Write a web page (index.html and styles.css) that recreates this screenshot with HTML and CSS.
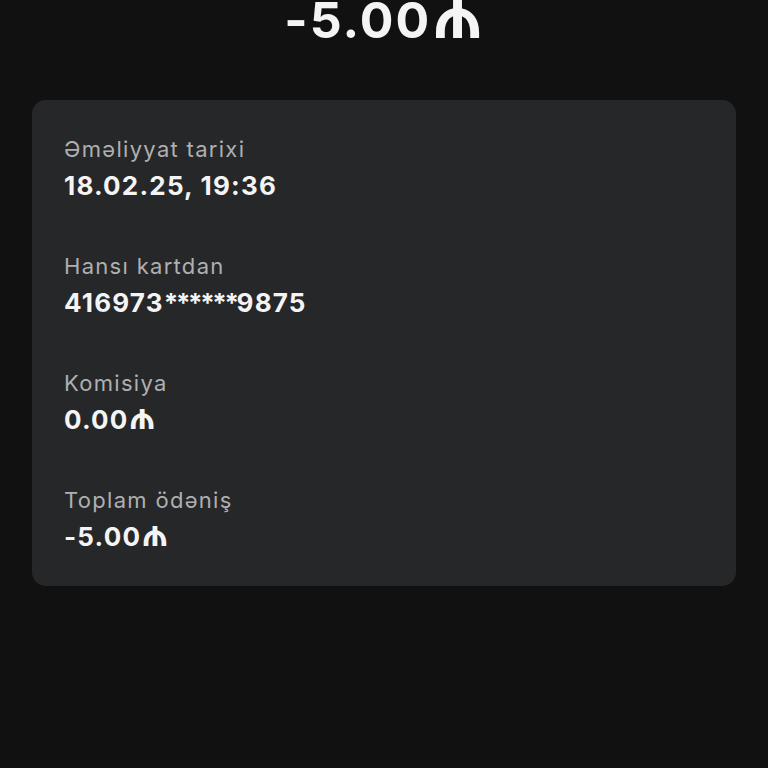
FILE: index.html
```html
<!DOCTYPE html>
<html>
	<head>
		<meta charset="utf-8">
		<title>Əməliyyat</title>
		<link rel="stylesheet" href="styles.css">
	</head>
	<body>
		<div class="amount">-5.00<span class="cur">₼</span></div>
		<div class="card">
			<div class="row">
				<div class="label">Əməliyyat tarixi</div>
				<div class="value">18.02.25, 19:36</div>
			</div>
			<div class="row">
				<div class="label">Hansı kartdan</div>
				<div class="value">416973<span class="mask">******</span>9875</div>
			</div>
			<div class="row">
				<div class="label">Komisiya</div>
				<div class="value">0.00<span class="cur">₼</span></div>
			</div>
			<div class="row">
				<div class="label">Toplam ödəniş</div>
				<div class="value">-5.00<span class="cur">₼</span></div>
			</div>
		</div>
	</body>
</html>
```

FILE: styles.css
```css
html {
  font-family: Inter, "Noto Sans", "DejaVu Sans", sans-serif;
}

body {
  margin: 0;
  background-color: #111112;
  color: #f4f4f4;
  height: 768px;
  overflow: hidden;
}

.amount {
  text-align: center;
  font-size: 50px;
  font-weight: 700;
  line-height: 50px;
  letter-spacing: 2px;
  margin-top: -5px;
  height: 105px;
}

.cur {
  font-family: Inter, sans-serif;
  font-size: 1.4em;
  font-weight: 600;
  line-height: 0;
  letter-spacing: 0;
}

.card {
  margin: 0 32px;
  background-color: #262729;
  border-radius: 14px;
  padding: 35px 32px 32px;
  display: flex;
  flex-direction: column;
  gap: 49px;
}

.label {
  font-size: 22px;
  line-height: 28px;
  letter-spacing: 1.3px;
  color: #afafb1;
}

.value {
  font-size: 26px;
  line-height: 34px;
  font-weight: 700;
  letter-spacing: 1.2px;
  margin-top: 6px;
}

.mask {
  letter-spacing: -2.4px;
}
```
